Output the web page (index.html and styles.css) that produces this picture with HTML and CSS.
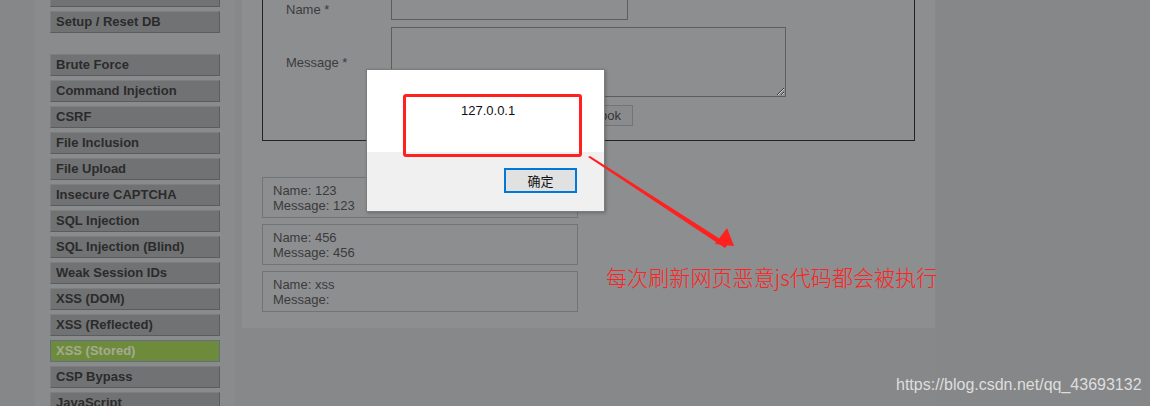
FILE: index.html
```html
<!DOCTYPE html>
<html lang="en">
<head>
    <meta charset="UTF-8">
    <title>Vulnerability: Stored Cross Site Scripting (XSS)</title>
    <link rel="stylesheet" href="styles.css">
</head>
<body>
    <div class="page">
        <div class="sidebar">
            <ul class="menu">
                <li>Instructions</li>
                <li>Setup / Reset DB</li>
            </ul>
            <ul class="menu">
                <li>Brute Force</li>
                <li>Command Injection</li>
                <li>CSRF</li>
                <li>File Inclusion</li>
                <li>File Upload</li>
                <li>Insecure CAPTCHA</li>
                <li>SQL Injection</li>
                <li>SQL Injection (Blind)</li>
                <li>Weak Session IDs</li>
                <li>XSS (DOM)</li>
                <li>XSS (Reflected)</li>
                <li class="selected">XSS (Stored)</li>
                <li>CSP Bypass</li>
                <li>JavaScript</li>
            </ul>
        </div>

        <div class="main">
            <div class="guestbook">
                <div class="label">Name *</div>
                <input class="name-input" type="text">
                <div class="label">Message *</div>
                <textarea class="msg-input"></textarea>
                <div></div>
                <div class="actions">
                    <button class="btn">Sign Guestbook</button>
                    <button class="btn">Clear Guestbook</button>
                </div>
            </div>

            <div class="entries">
                <div class="entry">Name: 123<br>Message: 123</div>
                <div class="entry">Name: 456<br>Message: 456</div>
                <div class="entry">Name: xss<br>Message: </div>
            </div>
        </div>
    </div>

    <div class="dialog">
        <div class="dialog-body">127.0.0.1</div>
        <div class="dialog-foot">
            <button class="ok-btn">确定</button>
        </div>
    </div>

    <div class="mark-box"></div>
    <svg class="mark-arrow" width="160" height="100" viewBox="0 0 160 100">
        <polygon points="0,0 2,-1 140,87 137,91" fill="#ff2020" transform="translate(0,2)"/>
        <polygon points="146,91 127,89 139,73" fill="#ff2020"/>
    </svg>
    <div class="mark-text">每次刷新网页恶意js代码都会被执行</div>

    <div class="watermark">https://blog.csdn.net/qq_43693132</div>
</body>
</html>
```

FILE: styles.css
```css
body {
    margin: 0;
    background: #868788;
    font-family: "Liberation Sans", Arial, sans-serif;
    overflow: hidden;
    height: 406px;
}
.page {
    display: flex;
    width: 900px;
    margin-left: 35px;
    margin-top: -40px;
    background: #878889;
    min-height: 460px;
}
.sidebar {
    width: 170px;
    padding: 25px 15px 0 15px;
    background: #8a8b8c;
}
.menu {
    list-style: none;
    margin: 0 0 21px 0;
    padding: 0;
}
.menu li {
    height: 20px;
    line-height: 20px;
    margin-bottom: 4px;
    padding-left: 5px;
    font-size: 13px;
    font-weight: bold;
    color: #2b2b2c;
    background: #717273;
    border: 1px solid;
    border-color: #7d7e7f #5b5c5d #5b5c5d #7d7e7f;
}
.menu li.selected {
    background: #6e8a3b;
    color: #a3ab93;
    border-color: #5f6e85;
}
.main {
    flex: 1;
    margin-left: 7px;
    padding: 26px 20px 16px 20px;
    background: #8d8e8f;
    align-self: flex-start;
}
.guestbook {
    display: grid;
    grid-template-columns: 105px auto;
    row-gap: 7px;
    align-items: center;
    justify-items: start;
    padding: 11px 0 14px 23px;
    border: 1px solid #222324;
}
.label {
    font-size: 13px;
    color: #3b3c3e;
}
.name-input {
    width: 237px;
    height: 22px;
    box-sizing: border-box;
    margin: 0;
    background: transparent;
    border: 1px solid #5c5d5e;
}
.msg-input {
    width: 395px;
    height: 70px;
    box-sizing: border-box;
    margin: 0;
    background: transparent;
    border: 1px solid #5c5d5e;
    resize: both;
}
.actions {
    display: flex;
    gap: 4px;
    margin-top: 1px;
}
.btn {
    height: 21px;
    padding: 0 11px;
    font-family: "Liberation Sans", Arial, sans-serif;
    font-size: 13px;
    color: #333436;
    background: #8a8b8c;
    border: 1px solid #737475;
}
.entries {
    margin-top: 36px;
    display: flex;
    flex-direction: column;
    gap: 6px;
}
.entry {
    width: 294px;
    padding: 5px 10px 4px 10px;
    font-size: 13px;
    line-height: 15px;
    color: #3a3b3d;
    border: 1px solid #737475;
}
.dialog {
    position: absolute;
    left: 366px;
    top: 69px;
    width: 237px;
    height: 141px;
    border: 1px solid #7d7d7d;
    background: #f0f0f0;
    box-shadow: 1px 1px 3px rgba(0, 0, 0, 0.25);
    font-family: "Liberation Sans", "Noto Sans CJK SC", sans-serif;
}
.dialog-body {
    height: 82px;
    background: #ffffff;
    padding: 33px 0 0 94px;
    box-sizing: border-box;
    font-size: 13px;
    color: #111;
}
.dialog-foot {
    display: flex;
    justify-content: flex-end;
    padding: 16px 27px 0 0;
}
.ok-btn {
    width: 73px;
    height: 25px;
    background: #e1e1e1;
    border: 2px solid #0078d7;
    font-family: "Noto Sans CJK SC", sans-serif;
    font-size: 13px;
    color: #111;
    padding: 0;
}
.mark-box {
    position: absolute;
    left: 403px;
    top: 94px;
    width: 173px;
    height: 57px;
    border: 3px solid #ff2020;
    border-radius: 3px;
}
.mark-arrow {
    position: absolute;
    left: 588px;
    top: 155px;
    overflow: visible;
}
.mark-text {
    position: absolute;
    left: 606px;
    top: 262px;
    font-family: "Noto Sans CJK SC", sans-serif;
    font-weight: 300;
    font-size: 21.1px;
    line-height: 30px;
    color: #ff2222;
}
.watermark {
    position: absolute;
    left: 896px;
    top: 376px;
    font-size: 16px;
    color: #dedede;
}
```
